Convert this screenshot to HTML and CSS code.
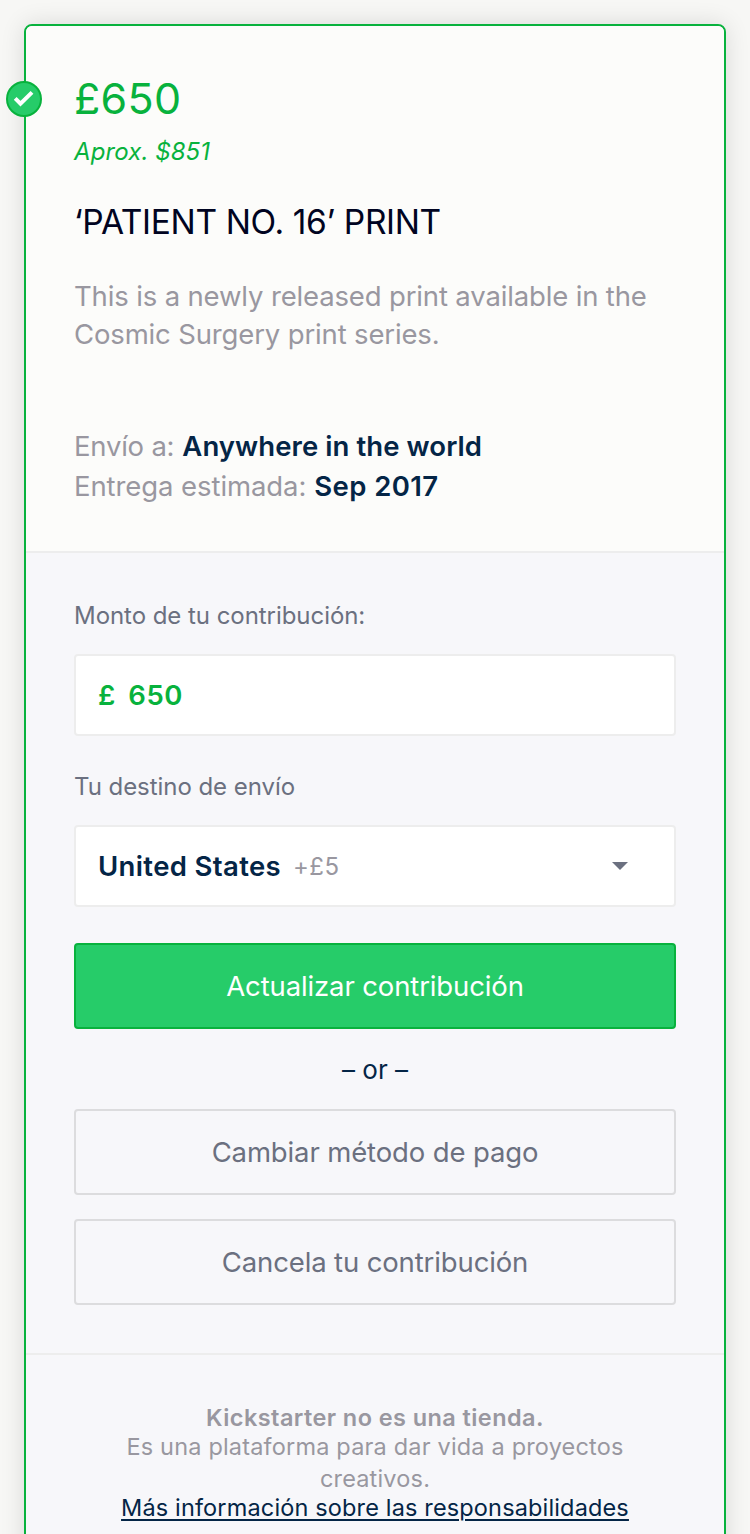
FILE: index.html
```html
<!DOCTYPE html>
<html lang="es">
<head>
<meta charset="utf-8">
<title>Contribución</title>
<link rel="stylesheet" href="styles.css">
</head>
<body>
<main class="card">
  <span class="badge">
    <svg viewBox="0 0 36 36" width="36" height="36"><circle cx="18" cy="18" r="17" fill="#26cc69" stroke="#08b23d" stroke-width="2"/><path d="M9.2 17.4l5.3 5.3L26 11.4" fill="none" stroke="#fff" stroke-width="4"/></svg>
  </span>
  <section class="reward">
    <div class="price">£650</div>
    <div class="approx">Aprox. $851</div>
    <h1 class="title">‘PATIENT NO. 16’ PRINT</h1>
    <p class="desc">This is a newly released print available in the<br>Cosmic Surgery print series.</p>
    <dl class="facts">
      <div class="fact"><dt class="fact-name">Envío a:</dt><dd class="fact-value">Anywhere in the world</dd></div>
      <div class="fact"><dt class="fact-name due">Entrega estimada:</dt><dd class="fact-value date">Sep 2017</dd></div>
    </dl>
  </section>
  <section class="form">
    <div class="label">Monto de tu contribución:</div>
    <div class="field amount"><span>£</span><span>650</span></div>
    <div class="label second">Tu destino de envío</div>
    <div class="field select"><span class="country">United States</span><span class="fee">+£5</span>
      <svg class="caret" viewBox="0 0 16 8" width="16" height="8"><path d="M0 0h16L8 8z" fill="#6b7080"/></svg>
    </div>
    <button class="btn primary">Actualizar contribución</button>
    <div class="or">– or –</div>
    <button class="btn">Cambiar método de pago</button>
    <button class="btn cancel">Cancela tu contribución</button>
  </section>
  <footer class="note">
    <strong class="note-title">Kickstarter no es una tienda.</strong>
    <p class="note-text">Es una plataforma para dar vida a proyectos<br>creativos.</p>
    <a class="note-link" href="#">Más información sobre las responsabilidades</a>
  </footer>
</main>
</body>
</html>
```
FILE: styles.css
```css
* { box-sizing: border-box; }
body {
  margin: 0;
  padding: 24px 24px 0;
  height: 1534px;
  overflow: hidden;
  background: #f7f7f5;
  font-family: Inter, "Liberation Sans", sans-serif;
  color: #9997a0;
}
.card {
  position: relative;
  height: 1560px;
  border: 2px solid #08b23d;
  border-radius: 8px;
  background: #f7f7fa;
  box-shadow: 0 0 24px rgba(0, 0, 0, .12);
}
.badge { position: absolute; left: -20px; top: 55px; height: 36px; }
.badge svg { display: block; }
.reward {
  padding: 48px 48px 45px;
  background: #fcfcfa;
  border-radius: 6px 6px 0 0;
  white-space: nowrap;
}
.price { font-size: 43px; line-height: 48px; letter-spacing: .3px; color: #08b23d; }
.approx { margin-top: 14px; font-size: 24px; line-height: 32px; letter-spacing: .1px; font-style: italic; color: #08b23d; }
.title { margin: 33px 0 0; font-size: 33.5px; line-height: 42px; letter-spacing: -.36px; font-weight: 400; color: #000421; }
.desc { margin: 34px 0 0; font-size: 27.5px; line-height: 38px; letter-spacing: -.15px; }
.facts { margin: 73px 0 0; font-size: 27.5px; line-height: 40px; }
.fact { display: flex; gap: 8px; }
.fact-name { letter-spacing: -.22px; }
.due { letter-spacing: -.08px; }
.fact-value { margin: 0; font-weight: 600; letter-spacing: .08px; color: #042546; }
.date { letter-spacing: .4px; }
.form {
  display: flex;
  flex-direction: column;
  padding: 47px 48px 48px;
  border-top: 2px solid #ededed;
  border-bottom: 2px solid #ededed;
}
.label { margin-bottom: 22px; font-size: 24px; line-height: 32px; letter-spacing: -.05px; color: #6b7080; }
.second { margin-top: 35px; }
.field {
  display: flex;
  align-items: center;
  height: 82px;
  padding: 0 22px;
  border: 2px solid #ededed;
  border-radius: 4px;
  background: #fff;
  font-size: 27.5px;
  font-weight: 600;
}
.amount { gap: 12.5px; letter-spacing: .5px; color: #08b23d; }
.country { letter-spacing: .36px; color: #042546; }
.fee { margin-left: 12px; font-size: 24px; font-weight: 400; letter-spacing: .4px; }
.caret { margin-left: auto; margin-right: 24px; }
.btn {
  height: 86px;
  padding: 0;
  border: 2px solid #dcdcde;
  border-radius: 4px;
  background: none;
  font: 400 27.5px Inter, "Liberation Sans", sans-serif;
  letter-spacing: -.13px;
  color: #6b7080;
}
.primary { margin-top: 36px; border-color: #08b23d; background: #26cc69; color: #fff; }
.or { margin: 21px 0 19px; font-size: 26px; line-height: 40px; text-align: center; color: #042546; }
.cancel { margin-top: 24px; }
.note {
  display: flex;
  flex-direction: column;
  align-items: center;
  padding-top: 49px;
  text-align: center;
  white-space: nowrap;
  font-size: 23.5px;
}
.note-title { line-height: 27px; font-weight: 600; letter-spacing: .42px; }
.note-text { margin: 0; line-height: 32px; letter-spacing: .18px; }
.note-link { line-height: 26px; letter-spacing: .15px; color: #042546; text-decoration-thickness: 2px; text-underline-offset: 3px; }
```
